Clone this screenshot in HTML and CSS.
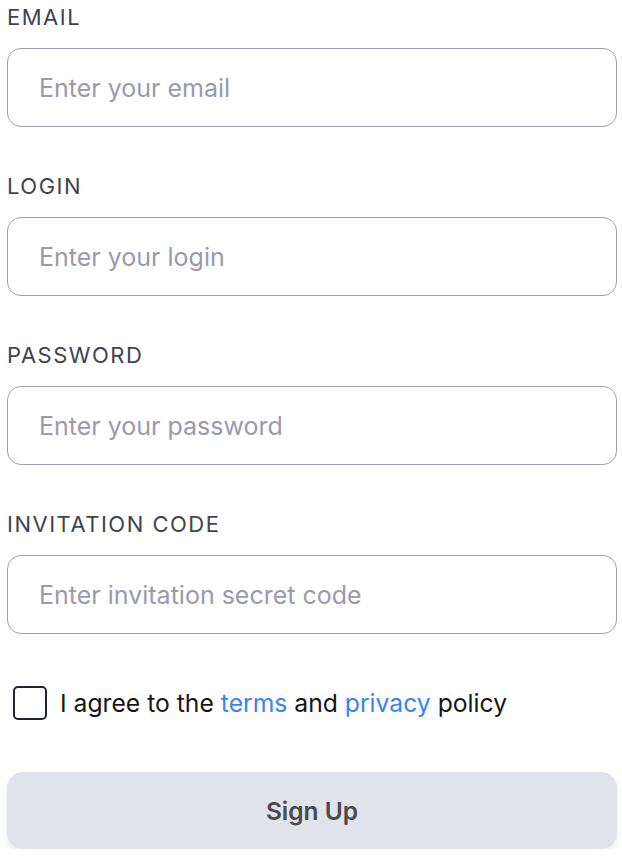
FILE: index.html
```html
<!DOCTYPE html>
<html>
<head>
<meta charset="utf-8">
<link rel="stylesheet" href="styles.css">
</head>
<body>
<form class="form">
  <div class="field">
    <label class="label">EMAIL</label>
    <input class="input" type="email" placeholder="Enter your email">
  </div>
  <div class="field">
    <label class="label">LOGIN</label>
    <input class="input" type="text" placeholder="Enter your login">
  </div>
  <div class="field">
    <label class="label">PASSWORD</label>
    <input class="input" type="password" placeholder="Enter your password">
  </div>
  <div class="field">
    <label class="label">INVITATION CODE</label>
    <input class="input" type="text" placeholder="Enter invitation secret code">
  </div>
  <label class="agree">
    <span class="box"></span>
    <span class="agree-text">I agree to the <a class="link" href="#">terms</a> and <a class="link" href="#">privacy</a> policy</span>
  </label>
  <button class="submit" type="button">Sign Up</button>
</form>
</body>
</html>
```
FILE: styles.css
```css
* { box-sizing: border-box; }
html, body { margin: 0; padding: 0; background: #fff; }
body { font-family: Inter, "Noto Sans", sans-serif; }
.form {
  display: flex;
  flex-direction: column;
  padding: 5px 5px 0 7px;
}
.field {
  display: flex;
  flex-direction: column;
  margin-bottom: 47px;
}
.label {
  font-size: 22px;
  line-height: 24px;
  letter-spacing: 1.5px;
  color: #3f444d;
  margin-bottom: 19px;
}
.input {
  height: 79px;
  border: 1px solid #9e9eb1;
  border-radius: 14px;
  padding: 0 31px;
  font-family: inherit;
  font-size: 25px;
  color: #333;
  outline: none;
  background: #fff;
}
.input::placeholder { color: #9a9aab; }
.agree {
  display: flex;
  align-items: center;
  gap: 13px;
  margin: 5px 0 0 6px;
  height: 34px;
}
.box {
  width: 34px;
  height: 34px;
  border: 2px solid #1f2630;
  border-radius: 5px;
  flex: none;
}
.agree-text {
  font-size: 24.7px;
  color: #161616;
}
.link { color: #3b82f6; text-decoration: none; }
.submit {
  margin-top: 52px;
  height: 77px;
  border: none;
  border-radius: 16px;
  background: #e0e3ea;
  box-shadow: 0 3px 6px rgba(0,0,0,0.08);
  font-family: inherit;
  font-size: 24.5px;
  font-weight: 600;
  color: #4a4a4a;
}
```
